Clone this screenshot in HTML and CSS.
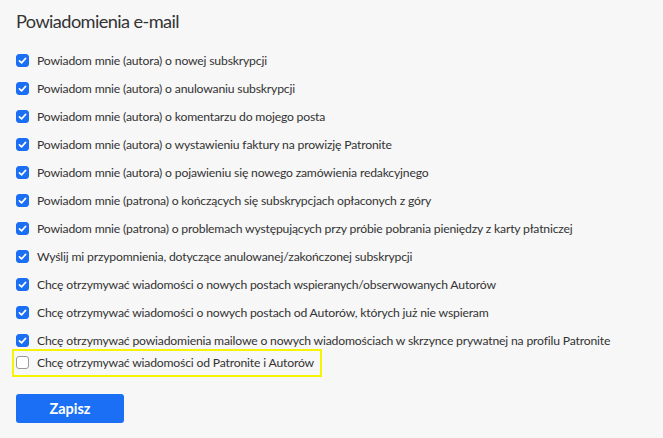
FILE: index.html
```html
<!DOCTYPE html>
<html lang="pl">
<head>
<meta charset="utf-8">
<link rel="stylesheet" href="styles.css">
</head>
<body>
<div class="page">
  <h1 class="title">Powiadomienia e-mail</h1>
  <ul class="list">
    <li class="row"><span class="box checked"><svg viewBox="0 0 13 13"><path d="M3.4 6.8 L5.6 8.9 L9.6 4.4" /></svg></span><span class="label">Powiadom mnie (autora) o nowej subskrypcji</span></li>
    <li class="row"><span class="box checked"><svg viewBox="0 0 13 13"><path d="M3.4 6.8 L5.6 8.9 L9.6 4.4" /></svg></span><span class="label">Powiadom mnie (autora) o anulowaniu subskrypcji</span></li>
    <li class="row"><span class="box checked"><svg viewBox="0 0 13 13"><path d="M3.4 6.8 L5.6 8.9 L9.6 4.4" /></svg></span><span class="label">Powiadom mnie (autora) o komentarzu do mojego posta</span></li>
    <li class="row"><span class="box checked"><svg viewBox="0 0 13 13"><path d="M3.4 6.8 L5.6 8.9 L9.6 4.4" /></svg></span><span class="label">Powiadom mnie (autora) o wystawieniu faktury na prowizję Patronite</span></li>
    <li class="row"><span class="box checked"><svg viewBox="0 0 13 13"><path d="M3.4 6.8 L5.6 8.9 L9.6 4.4" /></svg></span><span class="label">Powiadom mnie (autora) o pojawieniu się nowego zamówienia redakcyjnego</span></li>
    <li class="row"><span class="box checked"><svg viewBox="0 0 13 13"><path d="M3.4 6.8 L5.6 8.9 L9.6 4.4" /></svg></span><span class="label">Powiadom mnie (patrona) o kończących się subskrypcjach opłaconych z góry</span></li>
    <li class="row"><span class="box checked"><svg viewBox="0 0 13 13"><path d="M3.4 6.8 L5.6 8.9 L9.6 4.4" /></svg></span><span class="label">Powiadom mnie (patrona) o problemach występujących przy próbie pobrania pieniędzy z karty płatniczej</span></li>
    <li class="row"><span class="box checked"><svg viewBox="0 0 13 13"><path d="M3.4 6.8 L5.6 8.9 L9.6 4.4" /></svg></span><span class="label">Wyślij mi przypomnienia, dotyczące anulowanej/zakończonej subskrypcji</span></li>
    <li class="row"><span class="box checked"><svg viewBox="0 0 13 13"><path d="M3.4 6.8 L5.6 8.9 L9.6 4.4" /></svg></span><span class="label">Chcę otrzymywać wiadomości o nowych postach wspieranych/obserwowanych Autorów</span></li>
    <li class="row"><span class="box checked"><svg viewBox="0 0 13 13"><path d="M3.4 6.8 L5.6 8.9 L9.6 4.4" /></svg></span><span class="label">Chcę otrzymywać wiadomości o nowych postach od Autorów, których już nie wspieram</span></li>
    <li class="row"><span class="box checked"><svg viewBox="0 0 13 13"><path d="M3.4 6.8 L5.6 8.9 L9.6 4.4" /></svg></span><span class="label">Chcę otrzymywać powiadomienia mailowe o nowych wiadomościach w skrzynce prywatnej na profilu Patronite</span></li>
    <li class="row highlight"><span class="box"></span><span class="label">Chcę otrzymywać wiadomości od Patronite i Autorów</span></li>
  </ul>
  <button class="save">Zapisz</button>
</div>
</body>
</html>
```
FILE: styles.css
```css
html, body {
  margin: 0;
  padding: 0;
  background: #f7f7f7;
}
body {
  font-family: Lato, "Noto Sans", sans-serif;
  color: #333;
}
.page {
  padding: 8px 16px 0 16px;
}
.title {
  margin: 0;
  font-size: 18.2px;
  font-weight: 400;
  line-height: 24px;
  letter-spacing: -0.6px;
  color: #333;
  padding-top: 1px;
}
.list {
  list-style: none;
  margin: 13px 0 0 0;
  padding: 0;
}
.row {
  display: flex;
  align-items: center;
  height: 28px;
  font-size: 12.2px;
  letter-spacing: -0.18px;
  white-space: nowrap;
}
.box {
  width: 13px;
  height: 13px;
  box-sizing: border-box;
  border-radius: 3px;
  border: 1px solid #9a9a9a;
  background: #fff;
  flex: none;
  margin-right: 8px;
  display: flex;
}
.box.checked {
  background: #1a6ff5;
  border-color: #1a6ff5;
}
.box svg {
  width: 13px;
  height: 13px;
  margin: -1px;
}
.box svg path {
  fill: none;
  stroke: #fff;
  stroke-width: 1.6;
  stroke-linecap: round;
  stroke-linejoin: round;
}
.highlight {
  box-sizing: border-box;
  margin-top: -5px;
  margin-left: -4px;
  padding-left: 2px;
  padding-bottom: 2px;
  width: 310px;
  height: 28px;
  border: 2px solid #f5f500;
}
.save {
  margin-top: 17px;
  width: 108px;
  height: 29px;
  border: none;
  border-radius: 3px;
  background: #1a6ff5;
  color: #fff;
  font-family: Lato, "Noto Sans", sans-serif;
  font-weight: 700;
  font-size: 14.5px;
  cursor: pointer;
  display: block;
}
```
